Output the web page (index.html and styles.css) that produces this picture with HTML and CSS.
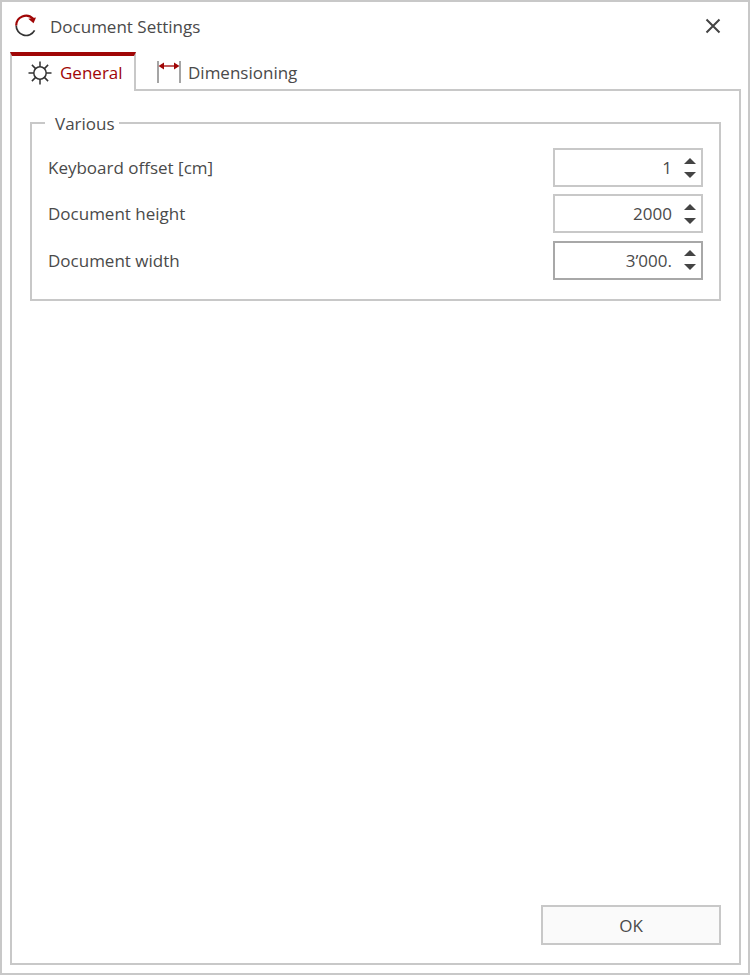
FILE: index.html
```html
<!DOCTYPE html>
<html lang="en">

<head>
    <meta charset="UTF-8">
    <meta name="viewport" content="width=device-width, initial-scale=1.0">
    <title>Document Settings</title>
    <link rel="stylesheet" href="styles.css">
</head>

<body>
    <div class="window">
        <div class="title-bar">
            <svg class="app-icon" width="24" height="24" viewBox="0 0 24 24" fill="none">
                <path d="M20.6 16.4A9.8 9.8 0 0 1 2.2 11.5" stroke="#333" stroke-width="1.7"/>
                <path d="M2.2 11.5A9.8 9.8 0 0 1 19 4.6" stroke="#a00606" stroke-width="2.2"/>
                <path d="M14.3 4.8L22 3.5L19.5 9.2Z" fill="#a00606"/>
            </svg>
            <span class="title">Document Settings</span>
            <svg class="close-icon" width="16" height="16" viewBox="0 0 16 16" fill="none">
                <path d="M1.5 1.5L14.5 14.5M14.5 1.5L1.5 14.5" stroke="#444" stroke-width="2"/>
            </svg>
        </div>
        <div class="tabs">
            <div class="tab is-active">
                <svg width="24" height="24" viewBox="0 0 24 24" fill="none" stroke="#333" stroke-width="1.5">
                    <circle cx="12" cy="12" r="6.2"/>
                    <path d="M12 0.5V5.8M12 18.2V23.5M0.5 12H5.8M18.2 12H23.5M3.9 3.9L7.6 7.6M16.4 16.4L20.1 20.1M20.1 3.9L16.4 7.6M7.6 16.4L3.9 20.1"/>
                </svg>
                <span>General</span>
            </div>
            <div class="tab">
                <svg width="24" height="24" viewBox="0 0 24 24" fill="none">
                    <path d="M1 1V23M23 1V23" stroke="#888" stroke-width="1.5"/>
                    <path d="M3 6H21" stroke="#a00606" stroke-width="1.3"/>
                    <path d="M1.5 6L7 2.5V9.5ZM22.5 6L17 2.5V9.5Z" fill="#a00606"/>
                </svg>
                <span>Dimensioning</span>
            </div>
        </div>
        <div class="panel">
            <fieldset class="group">
                <legend>Various</legend>
                <div class="row">
                    <label>Keyboard offset [cm]</label>
                    <div class="spinner">
                        <span class="value">1</span>
                        <span class="arrows"><i class="up"></i><i class="down"></i></span>
                    </div>
                </div>
                <div class="row">
                    <label>Document height</label>
                    <div class="spinner">
                        <span class="value">2000</span>
                        <span class="arrows"><i class="up"></i><i class="down"></i></span>
                    </div>
                </div>
                <div class="row">
                    <label>Document width</label>
                    <div class="spinner is-focused">
                        <span class="value">3’000.</span>
                        <span class="arrows"><i class="up"></i><i class="down"></i></span>
                    </div>
                </div>
            </fieldset>
            <div class="footer">
                <button class="ok-btn">OK</button>
            </div>
        </div>
    </div>
</body>

</html>
```

FILE: styles.css
```css
* {
    box-sizing: border-box;
}

html, body {
    margin: 0;
    height: 100%;
}

body {
    font-family: "Open Sans", "Noto Sans", sans-serif;
    font-size: 17px;
    color: #4a4a4a;
    background-color: white;
}

.window {
    height: 975px;
    border: 2px solid #c8c8c8;
    padding: 0 7px 8px 8px;
    display: flex;
    flex-direction: column;
}

.title-bar {
    height: 50px;
    flex: none;
    display: flex;
    align-items: center;
    padding: 0 20px 2px 4px;
}

.app-icon {
    margin-right: 12px;
}

.title {
    flex: 1;
}

.tabs {
    display: flex;
    flex: none;
    height: 39px;
}

.tab {
    display: flex;
    align-items: center;
    gap: 8px;
    border-bottom: 2px solid #c8c8c8;
}

.tab svg {
    flex: none;
}

.tab:last-child {
    padding: 3px 0 0 21px;
    gap: 7px;
    flex: 1;
}

.tab.is-active {
    width: 126px;
    padding: 0 0 2px 16px;
    color: #a00606;
    border-top: 4px solid #a00606;
    border-left: 2px solid #c8c8c8;
    border-right: 2px solid #c8c8c8;
    border-bottom: none;
}

.panel {
    flex: 1;
    display: flex;
    flex-direction: column;
    border: 2px solid #c8c8c8;
    border-top: none;
    padding: 22px 18px 18px;
}

.group {
    margin: 0;
    height: 188px;
    border: 2px solid #c8c8c8;
    padding: 15px 16px 0;
}

legend {
    margin-left: -3px;
    padding: 2px 4px 0 10px;
    line-height: 18px;
}

.row {
    display: flex;
    justify-content: space-between;
    align-items: center;
    margin-bottom: 7.4px;
}

.spinner {
    width: 150px;
    height: 39px;
    border: 2px solid #c8c8c8;
    display: flex;
    align-items: center;
    justify-content: flex-end;
    padding-right: 5px;
}

.spinner.is-focused {
    border-color: #a8a8a8;
}

.value {
    margin-right: 12px;
}

.arrows {
    display: flex;
    flex-direction: column;
    gap: 8px;
}

.arrows i {
    display: block;
    width: 0;
    height: 0;
    border-left: 6px solid transparent;
    border-right: 6px solid transparent;
}

.arrows .up {
    border-bottom: 6px solid #444;
}

.arrows .down {
    border-top: 6px solid #444;
}

.footer {
    margin-top: auto;
    display: flex;
    justify-content: flex-end;
}

.ok-btn {
    width: 180px;
    height: 40px;
    border: 2px solid #c8c8c8;
    background-color: #fafafa;
    color: #4a4a4a;
    font-family: inherit;
    font-size: 17px;
    padding: 0;
}
```
